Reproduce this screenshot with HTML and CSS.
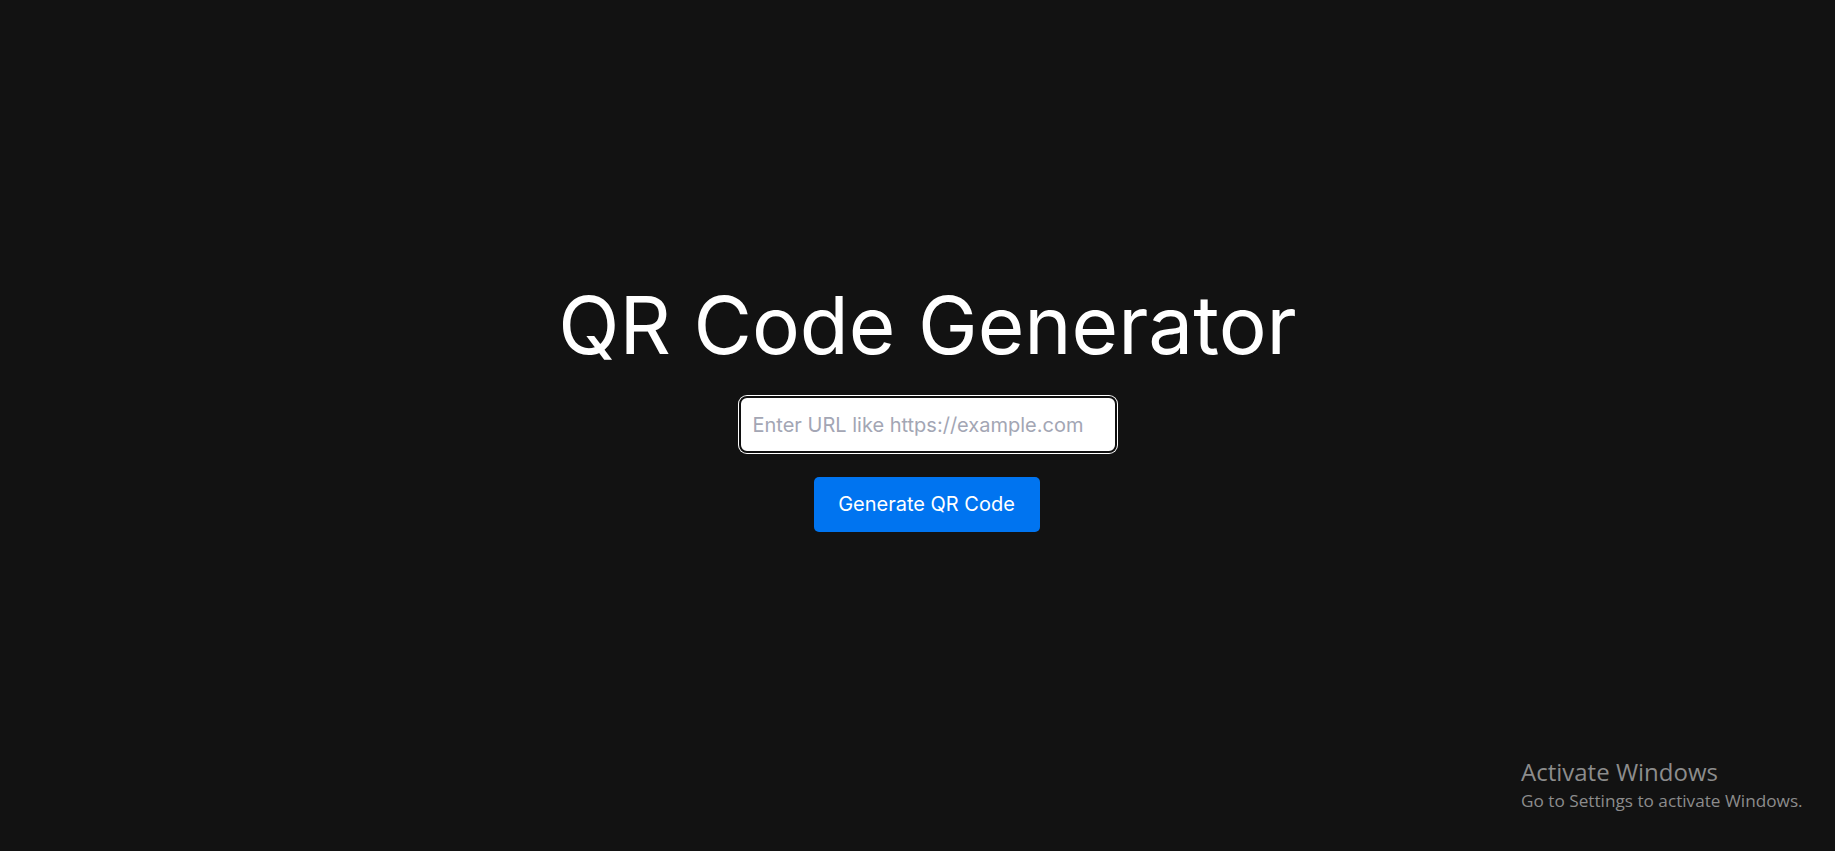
FILE: index.html
```html
<!DOCTYPE html>
<html lang="en">
<head>
<meta charset="utf-8">
<title>QR Code Generator</title>
<link rel="stylesheet" href="styles.css">
</head>
<body>
<main class="app">
  <h1 class="title">QR Code Generator</h1>
  <input class="url-input" type="text" placeholder="Enter URL like https://example.com">
  <button class="generate-btn" type="button">Generate QR Code</button>
</main>
<div class="watermark">
  <div class="wm-title">Activate Windows</div>
  <div class="wm-sub">Go to Settings to activate Windows.</div>
</div>
</body>
</html>
```
FILE: styles.css
```css
* { box-sizing: border-box; }
html, body { height: 100%; }
body {
  margin: 0;
  background: #121212;
  font-family: Inter, "Noto Sans", sans-serif;
  color: #fff;
  overflow: hidden;
}
.app {
  height: 100%;
  display: flex;
  flex-direction: column;
  align-items: center;
  justify-content: center;
  padding-left: 20px;
  padding-bottom: 42px;
}
.title {
  margin: 0 0 22px;
  font-size: 80px;
  font-weight: 400;
  line-height: 1.21;
  letter-spacing: 0;
}
.url-input {
  width: 378px;
  height: 57px;
  padding: 1px 12px 0;
  border: 2px solid #101010;
  border-radius: 8px;
  box-shadow: 0 0 0 1px #fff;
  outline: none;
  background: #fff;
  font-family: Inter, "Noto Sans", sans-serif;
  font-size: 20px;
  color: #222;
  margin-bottom: 24px;
}
.url-input::placeholder { color: #a3a6b4; }
.generate-btn {
  height: 55px;
  width: 226px;
  margin-right: 2px;
  border: none;
  border-radius: 5px;
  background: #0074f0;
  color: #fff;
  font-family: Inter, "Noto Sans", sans-serif;
  font-size: 20px;
  cursor: pointer;
}
.watermark {
  position: absolute;
  left: 1521px;
  top: 755px;
  color: #8c8c8c;
  font-family: "Open Sans", "Noto Sans", sans-serif;
}
.wm-title { font-size: 24px; line-height: 34px; }
.wm-sub { font-size: 17.2px; line-height: 24px; }
```
